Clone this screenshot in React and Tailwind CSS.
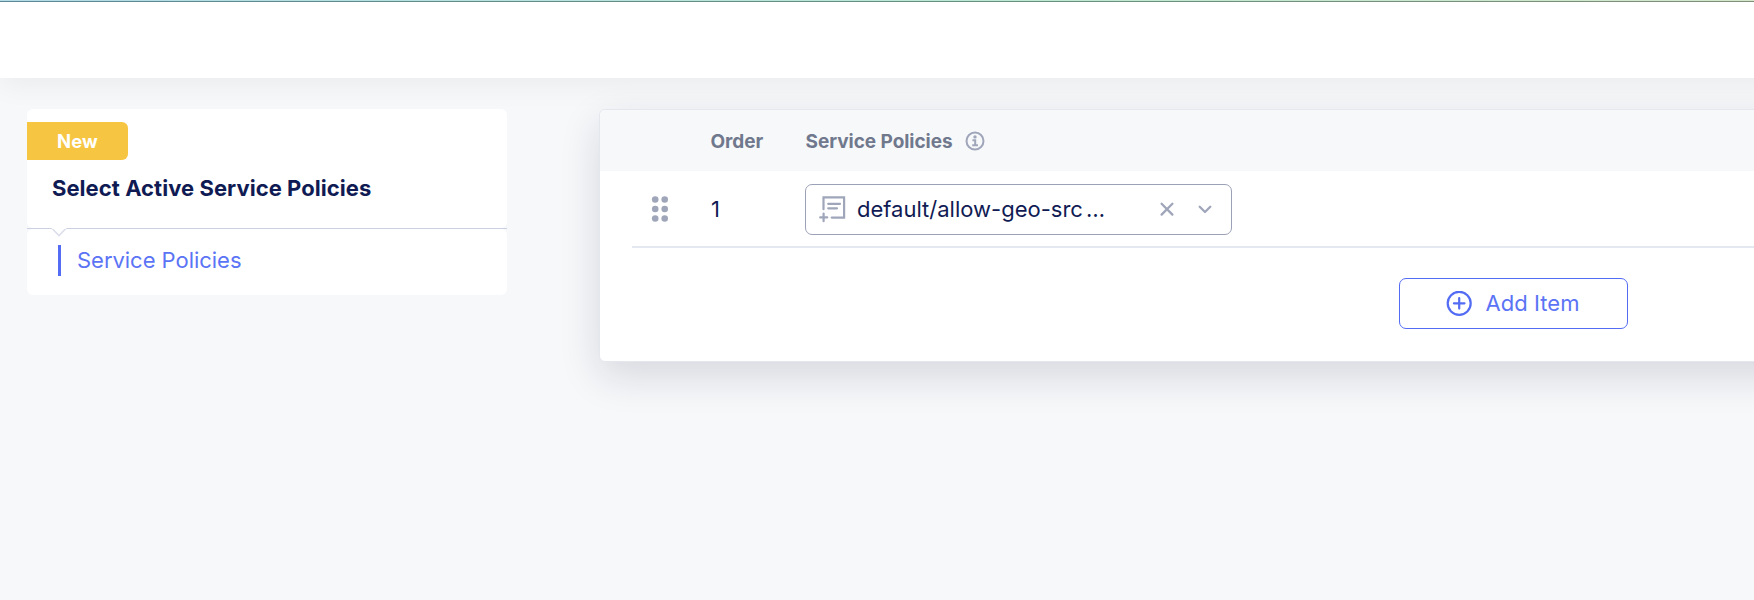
const GripIcon = () => (
  <svg width="18" height="28" viewBox="0 0 18 28" fill="#a0a6ba">
    {[4.5, 14, 23.5].map((y) => (
      <g key={y}>
        <circle cx="4.2" cy={y} r="3.3" />
        <circle cx="13.7" cy={y} r="3.3" />
      </g>
    ))}
  </svg>
);

const InfoIcon = () => (
  <svg width="20" height="20" viewBox="0 0 20 20" fill="none" stroke="#a0a6ba" strokeWidth="2">
    <circle cx="10" cy="10" r="8.5" />
    <circle cx="10" cy="5.9" r="1.7" fill="#a0a6ba" stroke="none" />
    <path d="M7.4 9.2h2.8v5M7.2 14.2h5.8" />
  </svg>
);

const PolicyIcon = () => (
  <svg width="28" height="28" viewBox="0 0 28 28" fill="none" stroke="#a0a6ba" strokeWidth="2.2" strokeLinecap="round">
    <path d="M4.5 14.2V2.4h20.6v20.2H12.7" />
    <path d="M9.2 8.8h11.8M9.2 13.3h8.8" />
    <path d="M4.6 18.6v7.6M1.2 22.4h7" />
  </svg>
);

const CloseIcon = () => (
  <svg width="16" height="16" viewBox="0 0 16 16" fill="none" stroke="#a0a6ba" strokeWidth="2.3" strokeLinecap="round">
    <path d="M2.6 2.8l10.8 10.8M13.4 2.8L2.6 13.6" />
  </svg>
);

const ChevronIcon = () => (
  <svg width="16" height="16" viewBox="0 0 16 16" fill="none" stroke="#a0a6ba" strokeWidth="2.3" strokeLinecap="round" strokeLinejoin="round">
    <path d="M2.7 5.8L8 11l5.3-5.2" />
  </svg>
);

const PlusCircleIcon = () => (
  <svg width="26" height="26" viewBox="0 0 26 26" fill="none" stroke="#536cf3" strokeWidth="2.2" strokeLinecap="round">
    <circle cx="13.2" cy="12.3" r="11.5" />
    <path d="M13.2 7v10.6M7.9 12.3h10.6" />
  </svg>
);

function Sidebar() {
  return (
    <nav className="w-[480px] shrink-0">
      <div className="h-[119px] rounded-md bg-white pt-[13px]">
        <div className="flex h-[38px] w-[101px] items-center justify-center rounded-r-md bg-[#f6c643] pt-px text-[18.5px] font-bold tracking-[0.1px] text-white">
          New
        </div>
        <h2 className="mt-[12px] pl-[25px] text-[22px] leading-[32px] font-bold tracking-[0.05px] whitespace-nowrap text-[#101b54]">
          Select Active Service Policies
        </h2>
      </div>
      <div className="relative h-px bg-[#cbd0e2]">
        <svg className="absolute top-0 left-[23px]" width="18" height="10" viewBox="0 0 18 10">
          <path d="M1.6 0L9 7.6 16.4 0" fill="#fff" stroke="#dcdfeb" strokeWidth="1.6" />
          <path d="M2.2 0h13.6v1H2.2z" fill="#fff" />
        </svg>
      </div>
      <div className="h-[66px] rounded-md bg-white pt-4 pl-[31px]">
        <div className="flex h-[31px] items-center border-l-[3px] border-[#536cf3] pl-[16px] text-[22px] tracking-[-0.03px] text-[#5b74f5]">
          Service Policies
        </div>
      </div>
    </nav>
  );
}

function PoliciesPanel() {
  return (
    <section className="ml-[92px] h-[253px] w-[1828px] shrink-0 rounded-md border border-[#e4e7ee] bg-white shadow-[0_14px_40px_rgba(20,20,50,0.14)]">
      <div className="flex h-[61px] items-center rounded-t-md bg-[#f7f8fa] pl-[110.5px] text-[19px] font-bold tracking-[-0.04px] text-[#70788d]">
        <span className="w-[95px] pt-[3px]">Order</span>
        <span className="w-[159px] pt-[3px] whitespace-nowrap">Service Policies</span>
        <InfoIcon />
      </div>
      <div className="ml-[32px] flex h-[77px] items-center border-b-2 border-[#e4e8f0] pt-px pl-[19px] text-[22px] text-[#101b54]">
        <GripIcon />
        <span className="ml-[42px] w-[94px]">1</span>
        <div className="flex h-[51px] w-[427px] items-center rounded-[7px] border border-[#9ba1b7] pl-[13px]">
          <PolicyIcon />
          <span className="ml-[10px] flex w-[302px] gap-[3px] whitespace-nowrap">
            <span>default/allow-geo-src</span>
            <span>…</span>
          </span>
          <CloseIcon />
          <span className="ml-[22px]"><ChevronIcon /></span>
        </div>
      </div>
      <div className="flex justify-center pt-[30px]">
        <button className="flex h-[51px] w-[229px] items-center justify-center gap-[13px] rounded-[7px] border border-[#536cf3] text-[22px] tracking-[0.05px] text-[#5b74f5]">
          <PlusCircleIcon />
          Add Item
        </button>
      </div>
    </section>
  );
}

export default function App() {
  return (
    <div className="h-[600px] w-full overflow-hidden bg-[#f6f8fa] font-['Inter',sans-serif]">
      <div className="relative h-[78px] w-[2500px] bg-white shadow-[0_8px_28px_rgba(0,0,0,0.05)]">
        <div className="h-px bg-linear-to-r from-[#b4dbe8] via-[#bce9d5] via-40% to-[#ebe5c4]" />
        <div className="h-px bg-linear-to-r from-[#5b8994] via-[#699080] via-40% to-[#959070]" />
      </div>
      <main className="flex items-start pt-[31px] pl-[27px]">
        <Sidebar />
        <PoliciesPanel />
      </main>
    </div>
  );
}
